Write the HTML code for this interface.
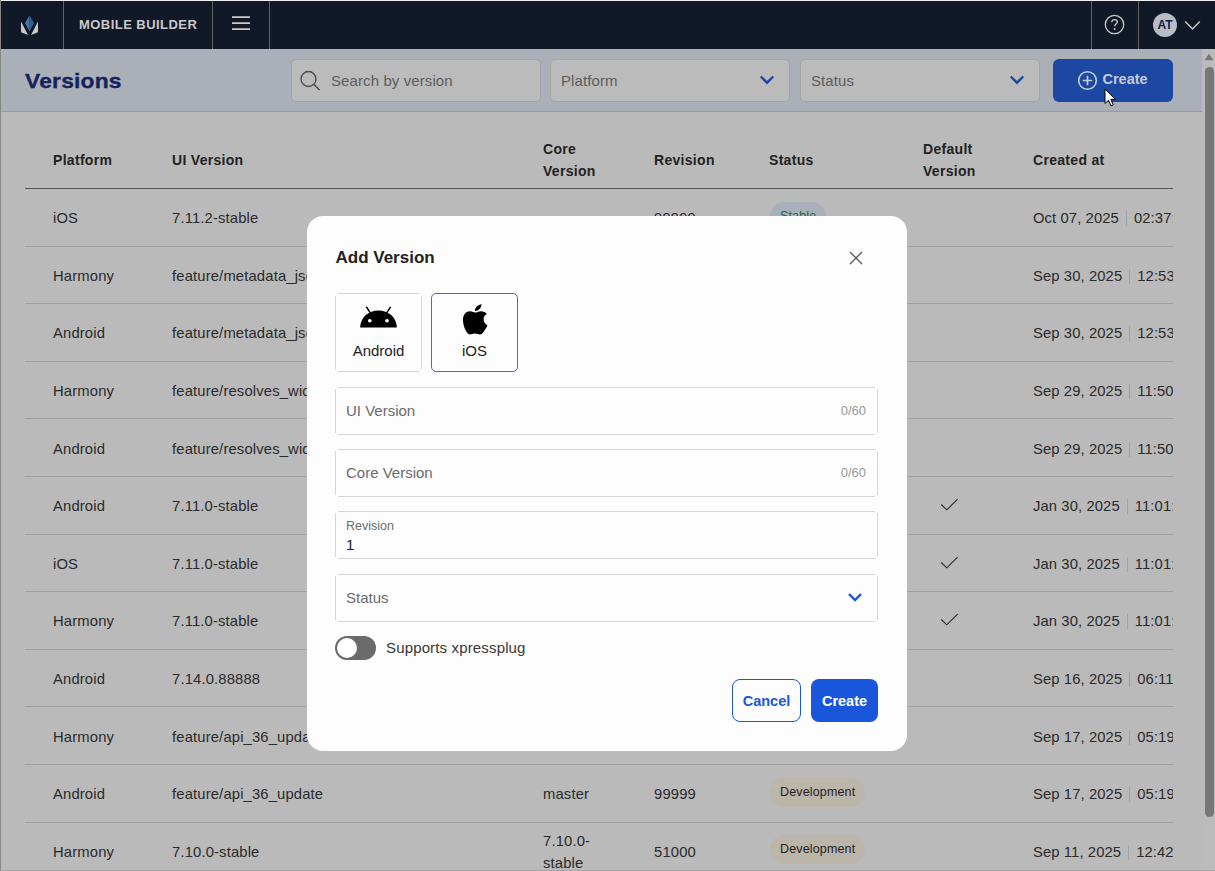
<!DOCTYPE html>
<html><head><meta charset="utf-8">
<style>
*{box-sizing:border-box;margin:0;padding:0}
html,body{width:1215px;height:871px;overflow:hidden;background:#bababa;font-family:"Liberation Sans",sans-serif;}
.abs{position:absolute}
#hdr{position:absolute;left:0;top:0;width:1215px;height:49px;background:#111827;}
.sep{position:absolute;top:1px;width:1px;height:48px;background:#626262}
#brand{position:absolute;left:79px;top:17px;font-size:13px;font-weight:bold;color:#c9c9c9;letter-spacing:0.45px;white-space:nowrap}
#sub{position:absolute;left:1px;top:49px;width:1201px;height:63px;background:#aaafb8;border-bottom:1px solid #8f9bb6}
#title{position:absolute;left:25px;top:68.5px;font-size:21px;font-weight:bold;color:#15235a;letter-spacing:0.2px;-webkit-text-stroke:0.35px #15235a;transform:scaleX(1.085);transform-origin:0 0}
.fld{position:absolute;top:59px;height:43px;background:#bbbbbb;border:1px solid #a5a5a5;border-radius:5px;font-size:15px;color:#5d5d5d}
.fld span{position:absolute;left:10px;top:11.5px;letter-spacing:0.1px}
#create{position:absolute;left:1053px;top:59px;width:120px;height:43px;background:#1c48a4;border-radius:6px}
#scroll{position:absolute;left:1202px;top:49px;width:13px;height:822px;background:#bbbbbb}
table{position:absolute;left:25px;top:112px;width:1148px;border-collapse:collapse;table-layout:fixed;font-size:14.8px;color:#2a2a2a}
td,th{text-align:left;padding:0;vertical-align:middle;white-space:nowrap;overflow:hidden}
th{font-weight:bold;font-size:14px;height:76.5px;line-height:22px;padding-top:19px;border-bottom:1px solid #555;letter-spacing:0.3px;color:#222}
td{height:57.6px;border-bottom:1px solid #a0a0a0;line-height:22px;padding-top:2px;letter-spacing:0.15px}
th.c1{padding-left:28px}td.c1{padding-left:28px}
.bdg{display:inline-block;font-size:12.5px;height:29px;line-height:29px;padding:0 10px;border-radius:14.5px;position:relative;left:1px;top:-2px;letter-spacing:0.15px}
.bdg.dv{background:#bcb5aa;color:#222}
.bdg.st{background:#a9b0bc;color:#1d6a45}
td.chk{padding-left:16px}
td.chk svg{display:block}
td.dt{letter-spacing:0.1px}
td.dt i{display:inline-block;width:1px;height:15px;background:#9ea3ab;margin:0 7px 0 7px;vertical-align:-3px}
#modal{position:absolute;left:307px;top:216px;width:600px;height:535px;background:#fdfdfd;border-radius:16px}
.mt{position:absolute;left:28.5px;top:32px;font-size:17px;font-weight:bold;color:#222;letter-spacing:0px}
.card{position:absolute;top:77px;height:79px}
.card .bt{position:absolute;height:1px;background:#d4d4d4}
.card .bl{position:absolute;width:1px;background:#d4d4d4}
.card.sel{border:1.5px solid #3b6fe0;border-radius:5px}
.cl{position:absolute;left:0;right:0;top:49px;text-align:center;font-size:15px;color:#222}
.card.sel .cl{top:47.5px}
.inp{position:absolute;left:28px;width:543px;height:48px}
.inp i.t,.inp i.b{position:absolute;left:3px;right:3px;height:1px;background:#d6d6d6}.inp i.t{top:0}.inp i.b{bottom:0}
.inp::before{content:"";position:absolute;left:0;top:2px;bottom:2px;width:1px;background:#d6d6d6}
.inp::after{content:"";position:absolute;right:0;top:2px;bottom:2px;width:1px;background:#d6d6d6}
.inp .ph{position:absolute;left:11px;top:15px;font-size:15px;color:#6b6b6b}
.inp .cnt{position:absolute;right:12px;top:16px;font-size:13px;color:#999}
.inp .lb{position:absolute;left:11px;top:8px;font-size:12.5px;color:#6b6b6b}
.inp .vl{position:absolute;left:11px;top:24.5px;font-size:15px;color:#222}
.tgl{position:absolute;left:28px;top:420px;width:41px;height:24px;border-radius:12px;background:#6b6b6b}
.tgl i{position:absolute;left:2px;top:2px;width:20px;height:20px;border-radius:50%;background:#fff}
.tl{position:absolute;left:79px;top:423px;font-size:15px;color:#383838;letter-spacing:0.15px}
.btn{position:absolute;top:463px;height:43px;border-radius:8px;font-size:14.5px;font-weight:bold;text-align:center;line-height:42.5px}
.btn.cancel{left:425px;width:69px;border:1.5px solid #1a56db;color:#1a56db}
.btn.ok{left:504px;width:67px;background:#1a56db;color:#fff;line-height:45px}
</style></head><body>

<div id="hdr">
  <div class="sep" style="left:63px"></div>
  <div class="sep" style="left:212px"></div>
  <div class="sep" style="left:269px"></div>
  <div class="sep" style="left:1091px"></div>
  <div class="sep" style="left:1138px"></div>
  <div id="brand">MOBILE BUILDER</div>
  <svg class="abs" style="left:18px;top:13px" width="22" height="24" viewBox="0 0 22 24">
    <path d="M11.5 2.5 L16 10 L11.5 18.5 Z" fill="#375d8c"/><path d="M11.5 2.5 L7 10 L11.5 18.5 Z" fill="#4877ad"/>
    <path d="M3 8.5 L10 22 L3.5 19.5 Q3 19 3 18 Z" fill="#c9c9c9"/><path d="M20 8.5 L13 22 L19.5 19.5 Q20 19 20 18 Z" fill="#c9c9c9"/>
  </svg>
  <svg class="abs" style="left:231px;top:15px" width="20" height="16" viewBox="0 0 20 16"><path d="M1 2.2 H19 M1 8.2 H19 M1 14.2 H19" stroke="#c9c9c9" stroke-width="1.7"/></svg>
  <svg class="abs" style="left:1104px;top:14px" width="21" height="21" viewBox="0 0 21 21"><circle cx="10.5" cy="10.5" r="9.2" stroke="#c9c9c9" stroke-width="1.3" fill="none"/><path d="M7.8 8.3 C7.8 6.6 9 5.6 10.6 5.6 C12.2 5.6 13.3 6.6 13.3 8 C13.3 9.9 10.6 10 10.6 12.3" stroke="#c9c9c9" stroke-width="1.4" fill="none"/><circle cx="10.6" cy="15" r="0.95" fill="#c9c9c9"/></svg>
  <div class="abs" style="left:1153px;top:13px;width:24px;height:24px;border-radius:50%;background:#b8bcc6;color:#142048;font-size:12px;font-weight:bold;text-align:center;line-height:24px">AT</div>
  <svg class="abs" style="left:1184px;top:20px" width="17" height="11" viewBox="0 0 17 11"><path d="M1.2 1.5 L8.5 9 L15.8 1.5" stroke="#c9c9c9" stroke-width="1.5" fill="none"/></svg>
</div>

<div id="sub"></div>
<div id="title">Versions</div>
<div class="fld" style="left:291px;width:250px"><span style="left:39px">Search by version</span></div>
<div class="fld" style="left:550px;width:240px"><span>Platform</span></div>
<div class="fld" style="left:800px;width:240px"><span>Status</span></div>
<div id="create"><svg class="abs" style="left:24px;top:11px" width="22" height="22" viewBox="0 0 22 22"><circle cx="10.5" cy="10.5" r="8.8" stroke="#c9cdd8" stroke-width="1.6" fill="none"/><path d="M10.5 5.8 V15.2 M5.8 10.5 H15.2" stroke="#c9cdd8" stroke-width="1.7"/></svg><span style="position:absolute;left:49.5px;top:12px;font-size:14.5px;font-weight:bold;color:#c6cad6">Create</span></div>
<svg class="abs" style="left:299px;top:69px" width="22" height="22" viewBox="0 0 22 22"><circle cx="9.5" cy="10" r="7.5" stroke="#4a4a4a" stroke-width="1.3" fill="none"/><path d="M14.8 15.3 L20.5 21" stroke="#4a4a4a" stroke-width="1.5"/></svg>
<svg class="abs" style="left:759px;top:74px" width="16" height="12" viewBox="0 0 16 12"><path d="M1.8 2.5 L8 8.7 L14.2 2.5" stroke="#1c48a4" stroke-width="2.4" fill="none"/></svg>
<svg class="abs" style="left:1009px;top:74px" width="16" height="12" viewBox="0 0 16 12"><path d="M1.8 2.5 L8 8.7 L14.2 2.5" stroke="#1c48a4" stroke-width="2.4" fill="none"/></svg>


<table>
<colgroup><col style="width:147px"><col style="width:371px"><col style="width:111px"><col style="width:115px"><col style="width:154px"><col style="width:110px"><col></colgroup>
<tr><th class="c1">Platform</th><th>UI Version</th><th>Core<br>Version</th><th>Revision</th><th>Status</th><th>Default<br>Version</th><th>Created at</th></tr>
<tr><td class="c1">iOS</td><td>7.11.2-stable</td><td></td><td>99999</td><td><span class="bdg st">Stable</span></td><td class="chk"></td><td class="dt"><span>Oct 07, 2025</span><i></i><span>02:37:11</span></td></tr>
<tr><td class="c1">Harmony</td><td>feature/metadata_json_update</td><td>master</td><td>99999</td><td><span class="bdg dv">Development</span></td><td class="chk"></td><td class="dt"><span>Sep 30, 2025</span><i></i><span>12:53:10</span></td></tr>
<tr><td class="c1">Android</td><td>feature/metadata_json_update</td><td>master</td><td>99999</td><td><span class="bdg dv">Development</span></td><td class="chk"></td><td class="dt"><span>Sep 30, 2025</span><i></i><span>12:53:10</span></td></tr>
<tr><td class="c1">Harmony</td><td>feature/resolves_widget_issue</td><td>master</td><td>99999</td><td><span class="bdg dv">Development</span></td><td class="chk"></td><td class="dt"><span>Sep 29, 2025</span><i></i><span>11:50:10</span></td></tr>
<tr><td class="c1">Android</td><td>feature/resolves_widget_issue</td><td>master</td><td>99999</td><td><span class="bdg dv">Development</span></td><td class="chk"></td><td class="dt"><span>Sep 29, 2025</span><i></i><span>11:50:10</span></td></tr>
<tr><td class="c1">Android</td><td>7.11.0-stable</td><td>7.11.0-stable</td><td>51100</td><td><span class="bdg st">Stable</span></td><td class="chk"><svg width="20" height="16" viewBox="0 0 20 16"><path d="M2.2 6.5 L7.8 11.8 L18.6 1.1" fill="none" stroke="#2a2a2a" stroke-width="1.1"/></svg></td><td class="dt"><span>Jan 30, 2025</span><i></i><span>11:01:10</span></td></tr>
<tr><td class="c1">iOS</td><td>7.11.0-stable</td><td>7.11.0-stable</td><td>51100</td><td><span class="bdg st">Stable</span></td><td class="chk"><svg width="20" height="16" viewBox="0 0 20 16"><path d="M2.2 6.5 L7.8 11.8 L18.6 1.1" fill="none" stroke="#2a2a2a" stroke-width="1.1"/></svg></td><td class="dt"><span>Jan 30, 2025</span><i></i><span>11:01:10</span></td></tr>
<tr><td class="c1">Harmony</td><td>7.11.0-stable</td><td>7.11.0-stable</td><td>51100</td><td><span class="bdg st">Stable</span></td><td class="chk"><svg width="20" height="16" viewBox="0 0 20 16"><path d="M2.2 6.5 L7.8 11.8 L18.6 1.1" fill="none" stroke="#2a2a2a" stroke-width="1.1"/></svg></td><td class="dt"><span>Jan 30, 2025</span><i></i><span>11:01:10</span></td></tr>
<tr><td class="c1">Android</td><td>7.14.0.88888</td><td>master</td><td>99999</td><td><span class="bdg dv">Development</span></td><td class="chk"></td><td class="dt"><span>Sep 16, 2025</span><i></i><span>06:11:10</span></td></tr>
<tr><td class="c1">Harmony</td><td>feature/api_36_update</td><td>master</td><td>99999</td><td><span class="bdg dv">Development</span></td><td class="chk"></td><td class="dt"><span>Sep 17, 2025</span><i></i><span>05:19:10</span></td></tr>
<tr><td class="c1">Android</td><td>feature/api_36_update</td><td>master</td><td>99999</td><td><span class="bdg dv">Development</span></td><td class="chk"></td><td class="dt"><span>Sep 17, 2025</span><i></i><span>05:19:10</span></td></tr>
<tr><td class="c1">Harmony</td><td>7.10.0-stable</td><td>7.10.0-<br>stable</td><td>51000</td><td><span class="bdg dv">Development</span></td><td class="chk"></td><td class="dt"><span>Sep 11, 2025</span><i></i><span>12:42:10</span></td></tr>
</table>

<div id="scroll">
  <svg class="abs" style="left:2px;top:4px" width="10" height="8" viewBox="0 0 10 8"><path d="M5 0.8 L9.5 7.2 H0.5 Z" fill="#777"/></svg>
  <div class="abs" style="left:3px;top:18px;width:9px;height:750px;border-radius:4.5px;background:#777"></div>
</div>
<div class="abs" style="left:0;top:0;width:1215px;height:1px;background:#f0f0f0"></div>
<div class="abs" style="left:0;top:0;width:1px;height:871px;background:#888"></div>
<div class="abs" style="left:0;top:870px;width:1215px;height:1px;background:#a6a6a6"></div>
<div id="modal">
  <div class="mt">Add Version</div>
  <svg class="abs" style="left:542px;top:35px" width="14" height="14" viewBox="0 0 14 14"><path d="M1 1 L13 13 M13 1 L1 13" stroke="#555" stroke-width="1.3" fill="none"/></svg>
  <div class="card" style="left:28px;width:87px">
    <i class="bt" style="left:3px;right:3px;top:0"></i><i class="bt" style="left:3px;right:3px;bottom:0"></i>
    <i class="bl" style="top:3px;bottom:3px;left:0"></i><i class="bl" style="top:3px;bottom:3px;right:0"></i>
    <svg class="abs" style="left:25px;top:13px" width="37" height="22" viewBox="0 0 37 22"><path d="M0.1 21.6 C0.6 11.2 8.6 4.6 18.5 4.6 C28.4 4.6 36.4 11.2 36.9 21.6 Z" fill="#000"/><path d="M10.6 7.4 L6.4 0.9 M26.4 7.4 L30.6 0.9" stroke="#000" stroke-width="1.5"/><ellipse cx="9.8" cy="14.7" rx="1.9" ry="1.7" fill="#fff"/><ellipse cx="27" cy="14.7" rx="1.9" ry="1.7" fill="#fff"/></svg>
    <div class="cl">Android</div>
  </div>
  <div class="card sel" style="left:124px;width:87px">
    <svg class="abs" style="left:29.5px;top:9px" width="27" height="33" viewBox="0 0 27 33"><path d="M13.2 9.6 C11.8 9.6 10.2 8.3 8 8.3 C4.2 8.3 1 11.5 1 16.8 C1 21.5 2.8 26.5 4.8 29.2 C5.8 30.6 6.8 31.4 8 31.4 C9.6 31.4 10.6 30.4 13 30.4 C15.4 30.4 16.2 31.4 18 31.4 C19.6 31.4 20.8 29.8 22 28.2 C23.6 26 24.6 24.4 25.5 22.6 C23 21.2 21.6 18.6 21.6 16 C21.6 13.4 23 11.8 25 10.9 C23.4 9 21.1 8.2 19 8.2 C16.4 8.2 14.8 9.6 13.2 9.6 Z M13 8.1 C12.9 5 15.4 1.9 19.5 1.3 C19.6 4.8 16.4 8 13 8.1 Z" fill="#000"/></svg>
    <div class="cl">iOS</div>
  </div>
  <div class="inp" style="top:171px"><i class="t"></i><i class="b"></i><span class="ph">UI Version</span><span class="cnt">0/60</span></div>
  <div class="inp" style="top:233.4px"><i class="t"></i><i class="b"></i><span class="ph">Core Version</span><span class="cnt">0/60</span></div>
  <div class="inp" style="top:295.4px"><i class="t"></i><i class="b"></i><span class="lb">Revision</span><span class="vl">1</span></div>
  <div class="inp" style="top:358.2px"><i class="t"></i><i class="b"></i><span class="ph">Status</span>
    <svg class="abs" style="left:512px;top:17px" width="16" height="12" viewBox="0 0 16 12"><path d="M2 3 L8 9 L14 3" stroke="#1a56db" stroke-width="2.4" fill="none"/></svg></div>
  <div class="tgl"><i></i></div>
  <div class="tl">Supports xpressplug</div>
  <div class="btn cancel">Cancel</div>
  <div class="btn ok">Create</div>
</div>
<svg class="abs" style="left:1104px;top:88px" width="14" height="20" viewBox="0 0 14 20"><path d="M1 1 L1 15.5 L4.5 12.3 L7 18 L9.3 17 L6.9 11.4 L11.6 11.4 Z" fill="#fff" stroke="#000" stroke-width="1"/></svg>
</body></html>
